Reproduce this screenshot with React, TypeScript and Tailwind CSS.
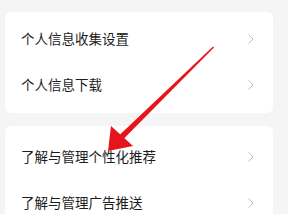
const cardGroups = [
  { pad: "pt-[4px] pb-[5px]", items: ["个人信息收集设置", "个人信息下载"] },
  { pad: "pt-[8px] pb-[4px]", items: ["了解与管理个性化推荐", "了解与管理广告推送"] },
];

function Chevron() {
  return (
    <svg width="6" height="10" viewBox="0 0 6 10" fill="none" className="shrink-0">
      <path d="M0.8 0.8 L5 5 L0.8 9.2" stroke="#bdbdbd" strokeWidth="1" strokeLinecap="round" strokeLinejoin="round" />
    </svg>
  );
}

function Row({ label }: { label: string }) {
  return (
    <div className="h-[46px] flex items-center justify-between pl-[16px] pr-[19px]">
      <span className="text-[13.5px] leading-none text-[#1c1c1c]">{label}</span>
      <Chevron />
    </div>
  );
}

export default function App() {
  return (
    <div
      className="relative w-[303px] h-[214px] overflow-hidden flex bg-white"
      style={{ fontFamily: '"Noto Sans CJK SC", "Noto Sans", sans-serif' }}
    >
      <div className="w-[288px] h-full bg-[#f5f5f5] pl-[5px] pr-[15px] pt-[12px] flex flex-col gap-[13px]">
        {cardGroups.map((group, i) => (
          <div key={i} className={`bg-white rounded-[6px] ${group.pad}`}>
            {group.items.map((label) => (
              <Row key={label} label={label} />
            ))}
          </div>
        ))}
      </div>

      {/* red annotation arrow */}
      <svg className="absolute left-0 top-0 pointer-events-none" width="303" height="214" viewBox="0 0 303 214">
        <polygon points="213,46.5 214,47.5 123,139.5 119,135.5" fill="#e8141c" />
        <polygon points="108,151 111,126 133,146" fill="#e8141c" />
      </svg>
    </div>
  );
}
